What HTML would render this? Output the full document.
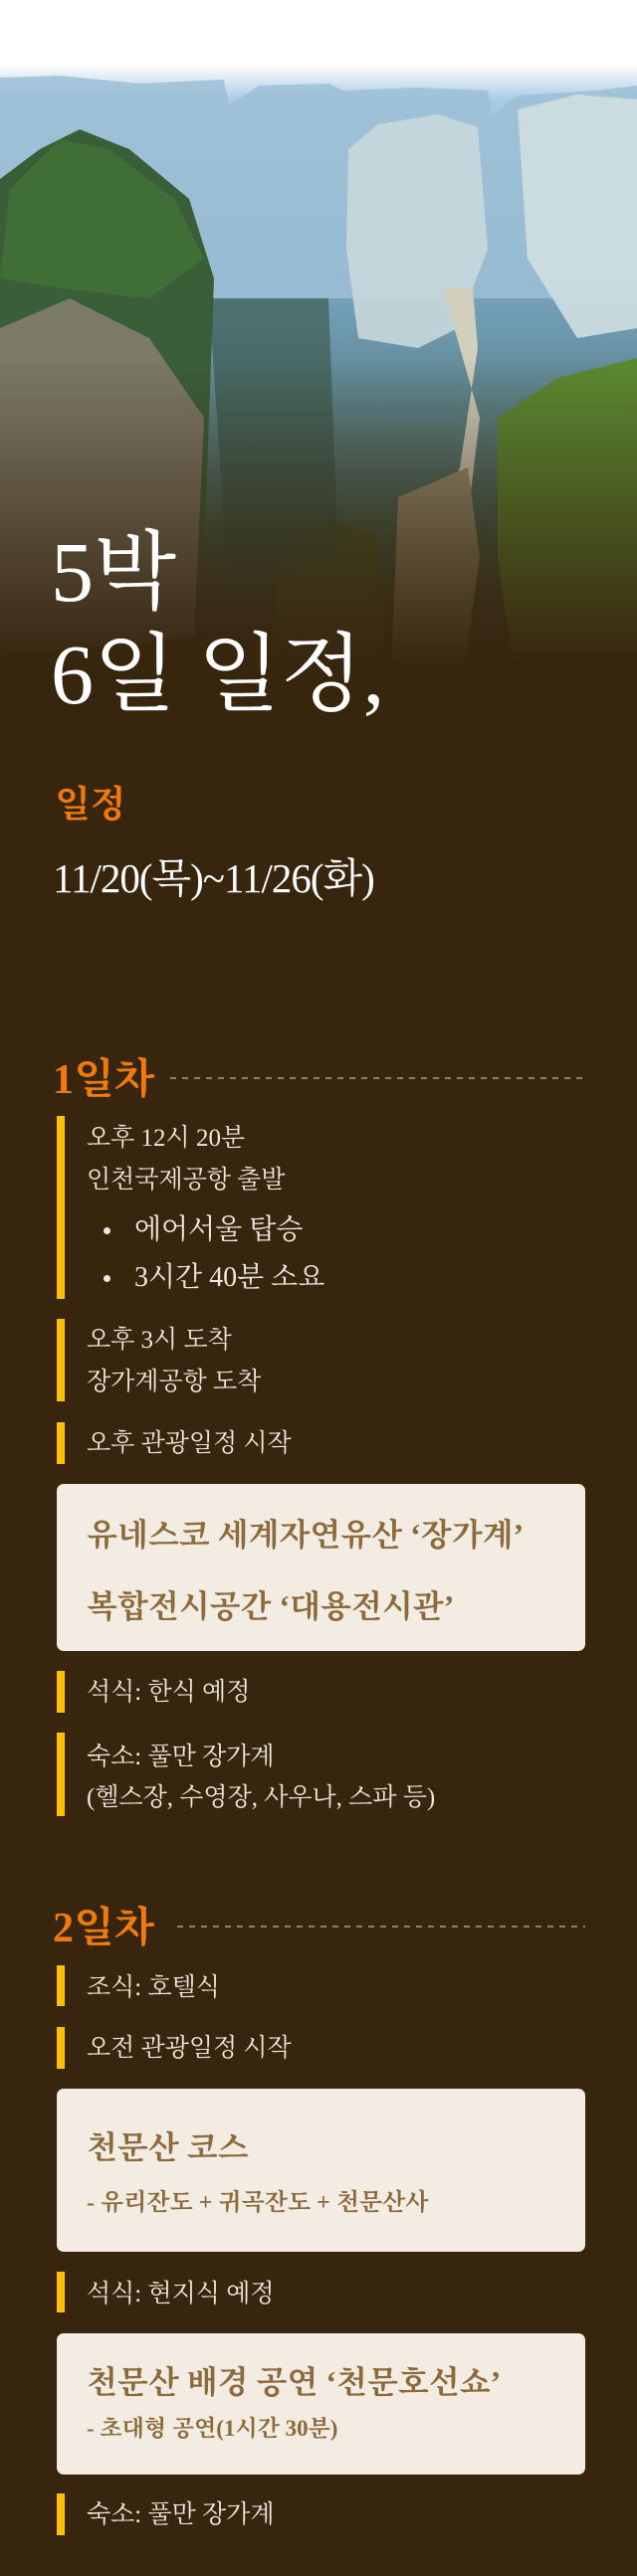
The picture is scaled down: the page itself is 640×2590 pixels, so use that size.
<!DOCTYPE html>
<html><head><meta charset="utf-8">
<style>
*{margin:0;padding:0;box-sizing:border-box}
body{width:640px;height:2590px;background:#38250e;position:relative;overflow:hidden;font-family:"Liberation Serif","Noto Serif CJK SC",serif;color:#ede7dd}
.a{position:absolute;white-space:nowrap}
.t{font-size:25px;line-height:30px;left:87px}
.b{font-size:28px;line-height:34px;left:135px}
.dot{position:absolute;left:104px;width:7px;height:7px;border-radius:50%;background:#ede7dd}
.bar{position:absolute;left:57px;width:8px;background:#ffc000}
.day{font-size:42px;line-height:50px;left:53px;color:#f07a0c;font-weight:bold}
.dash{position:absolute;height:2px;background:repeating-linear-gradient(90deg,#8a8070 0 6px,transparent 6px 12px)}
.card{position:absolute;left:57px;width:531px;background:#f2ece2;border-radius:7px}
.ct{position:absolute;left:30px;white-space:nowrap;color:#8d6a3c;font-weight:bold}
</style></head><body>
<svg class="a" style="left:0;top:0" width="640" height="720" viewBox="0 0 640 720">
<defs>
<linearGradient id="sky" x1="0" y1="0" x2="0" y2="1"><stop offset="0" stop-color="#ffffff"/><stop offset="0.09" stop-color="#ffffff"/><stop offset="0.14" stop-color="#a9cbe2"/><stop offset="0.45" stop-color="#6f9bb2"/><stop offset="0.75" stop-color="#3f5e4c"/><stop offset="1" stop-color="#38250e"/></linearGradient>
<linearGradient id="dk" x1="0" y1="0" x2="0" y2="1"><stop offset="0" stop-color="#38250e" stop-opacity="0"/><stop offset="0.5" stop-color="#38250e" stop-opacity="0"/><stop offset="0.75" stop-color="#38250e" stop-opacity="0.6"/><stop offset="0.93" stop-color="#38250e"/><stop offset="1" stop-color="#38250e"/></linearGradient>
</defs>
<rect width="640" height="720" fill="url(#sky)"/>
<path d="M0 78 L60 76 L140 84 L225 80 L230 106 L260 86 L330 84 L345 91 L420 88 L490 91 L495 116 L520 96 L600 91 L640 86 L640 300 L0 300Z" fill="#9cc0d6" opacity="0.85"/>
<path d="M0 180 L40 150 L80 130 L130 150 L190 200 L215 280 L205 560 L0 600Z" fill="#3a5e38"/>
<path d="M0 330 L70 300 L150 340 L205 420 L195 640 L0 660Z" fill="#7c7a68"/>
<path d="M10 190 L60 140 L110 150 L175 200 L205 260 L150 300 L60 290 L0 280Z" fill="#3f6e36"/>
<path d="M350 150 L380 125 L440 115 L480 128 L490 250 L460 330 L420 350 L360 340 L348 250Z" fill="#c6d8dc" opacity="0.9"/>
<path d="M520 110 L580 95 L640 100 L640 330 L580 340 L530 260Z" fill="#cfdfe0" opacity="0.9"/>
<path d="M445 290 L475 290 L480 350 L462 470 L425 560 L405 620 L440 640 L470 520 L482 420Z" fill="#d2cfbc"/>
<path d="M400 500 L470 470 L482 560 L462 700 L392 700Z" fill="#9a9478"/>
<path d="M280 560 L330 520 L380 540 L390 700 L270 700Z" fill="#44592f"/>
<path d="M500 420 L560 380 L640 360 L640 700 L520 700 L500 560Z" fill="#5b8a32"/>
<path d="M210 300 L330 300 L340 560 L230 600Z" fill="#355444" opacity="0.6"/>
<rect width="640" height="720" fill="url(#dk)"/>
</svg>

<div class="a" style="left:51px;top:523px;font-size:86px;line-height:104px;color:#fff">5박</div>
<div class="a" style="left:51px;top:626px;font-size:86px;line-height:104px;color:#fff">6일 일정,</div>
<div class="a" style="left:55px;top:788px;font-size:37px;line-height:44px;color:#f07a0c;font-weight:bold">일정</div>
<div class="a" style="left:53px;top:860px;font-size:41px;line-height:46px;color:#fff;letter-spacing:-1px">11/20(목)~11/26(화)</div>

<div class="a day" style="top:1061px">1일차</div>
<div class="dash" style="left:171px;width:417px;top:1083px"></div>

<div class="bar" style="top:1122px;height:184px"></div>
<div class="a t" style="top:1130px">오후 12시 20분</div>
<div class="a t" style="top:1172px">인천국제공항 출발</div>
<div class="dot" style="top:1234px"></div>
<div class="a b" style="top:1220px">에어서울 탑승</div>
<div class="dot" style="top:1282px"></div>
<div class="a b" style="top:1268px">3시간 40분 소요</div>

<div class="bar" style="top:1326px;height:83px"></div>
<div class="a t" style="top:1333px">오후 3시 도착</div>
<div class="a t" style="top:1375px">장가계공항 도착</div>

<div class="bar" style="top:1430px;height:42px"></div>
<div class="a t" style="top:1437px">오후 관광일정 시작</div>

<div class="card" style="top:1492px;height:168px">
<div class="ct" style="top:31px;font-size:32px;line-height:40px">유네스코 세계자연유산 ‘장가계’</div>
<div class="ct" style="top:103px;font-size:32px;line-height:40px">복합전시공간 ‘대용전시관’</div>
</div>

<div class="bar" style="top:1680px;height:42px"></div>
<div class="a t" style="top:1687px">석식: 한식 예정</div>
<div class="bar" style="top:1742px;height:84px"></div>
<div class="a t" style="top:1752px">숙소: 풀만 장가계</div>
<div class="a t" style="top:1793px">(헬스장, 수영장, 사우나, 스파 등)</div>

<div class="a day" style="top:1914px">2일차</div>
<div class="dash" style="left:178px;width:410px;top:1936px"></div>

<div class="bar" style="top:1976px;height:41px"></div>
<div class="a t" style="top:1984px">조식: 호텔식</div>
<div class="bar" style="top:2038px;height:42px"></div>
<div class="a t" style="top:2045px">오전 관광일정 시작</div>

<div class="card" style="top:2100px;height:164px">
<div class="ct" style="top:39px;font-size:32px;line-height:40px">천문산 코스</div>
<div class="ct" style="top:100px;font-size:24px;line-height:30px">- 유리잔도 + 귀곡잔도 + 천문산사</div>
</div>

<div class="bar" style="top:2284px;height:41px"></div>
<div class="a t" style="top:2292px">석식: 현지식 예정</div>

<div class="card" style="top:2346px;height:142px">
<div class="ct" style="top:29px;font-size:32px;line-height:40px">천문산 배경 공연 ‘천문호선쇼’</div>
<div class="ct" style="top:81px;font-size:23px;line-height:30px">- 초대형 공연(1시간 30분)</div>
</div>

<div class="bar" style="top:2507px;height:42px"></div>
<div class="a t" style="top:2514px">숙소: 풀만 장가계</div>
</body></html>
